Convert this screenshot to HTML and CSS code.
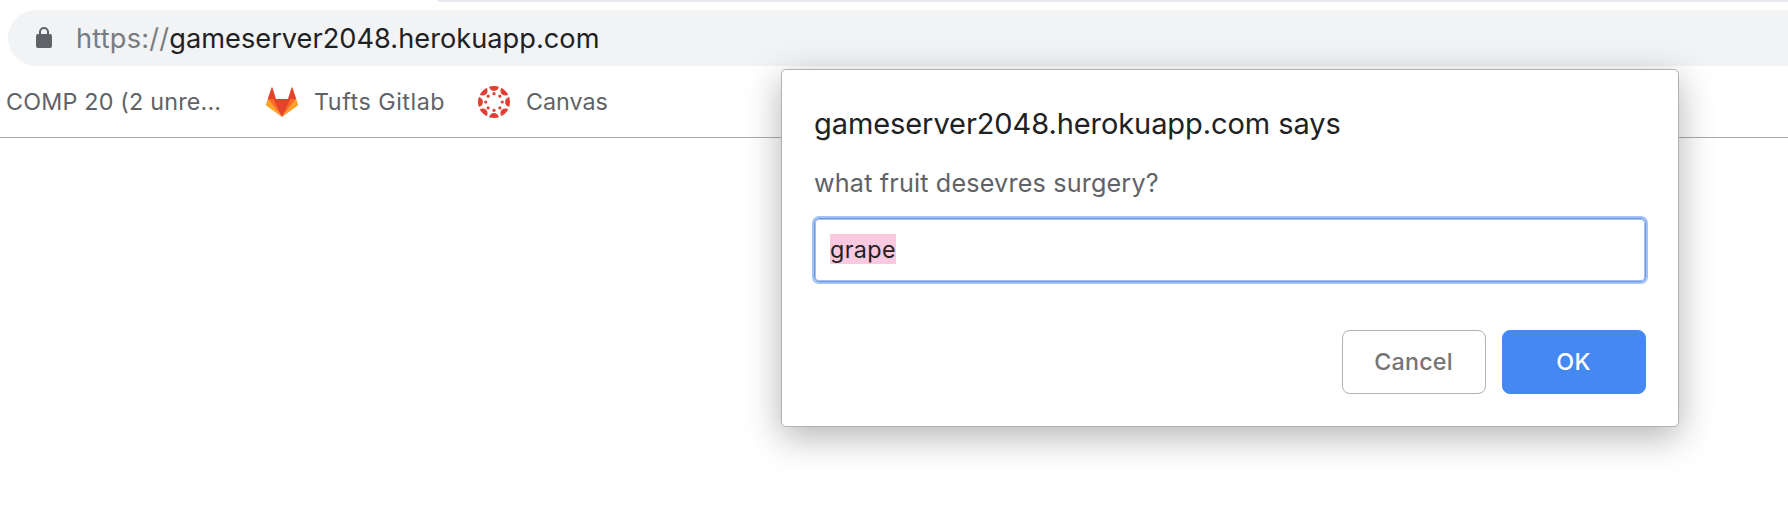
FILE: index.html
```
<!DOCTYPE html>
<html lang="en">
<head>
<meta charset="utf-8">
<title>gameserver2048.herokuapp.com</title>
<link rel="stylesheet" href="styles.css">
</head>
<body>
<div class="browser">
  <div class="tab-edge"></div>
  <div class="omnibox">
    <svg class="lock" width="16" height="22" viewBox="0 0 16 22"><path d="M4 8V5a4 4 0 0 1 8 0v3" fill="none" stroke="#5f6368" stroke-width="2"/><rect y="7" width="16" height="14" rx="2" fill="#5f6368"/></svg>
    <div class="url"><span class="scheme">https://</span><span class="host">gameserver2048.herokuapp.com</span></div>
  </div>
  <div class="bookmarks">
    <span class="bookmark first">COMP 20 (2 unre...</span>
    <svg class="gitlab" width="32" height="30" viewBox="0 0 32 30"><path d="M1.700 12 0 17.500q-.2.800.5 1.300L16 30zM30.300 12l1.700 5.500q.2.800-.5 1.300L16 30z" fill="#fca326"/><path d="M16 30 10 12H1.700zM16 30l6-18h8.300z" fill="#fc6d26"/><path d="M16 30 7.500 12h17z" fill="#e24329"/><path d="M1.700 12 5.600.6q.4-.9.800 0L10 12zM30.300 12 26.400.6q-.4-.9-.8 0L22 12z" fill="#e24329"/></svg>
    <span class="bookmark tufts">Tufts Gitlab</span>
    <svg class="canvas" width="32" height="32" viewBox="0 0 32 32"><defs><clipPath id="disc"><circle cx="16" cy="16" r="16"/></clipPath><g id="spoke"><circle cx="16" cy="0" r="4.900"/><circle cx="16" cy="7.700" r="1.600"/></g></defs><g clip-path="url(#disc)" fill="#e13f33"><use href="#spoke"/><use href="#spoke" transform="rotate(45 16 16)"/><use href="#spoke" transform="rotate(90 16 16)"/><use href="#spoke" transform="rotate(135 16 16)"/><use href="#spoke" transform="rotate(180 16 16)"/><use href="#spoke" transform="rotate(225 16 16)"/><use href="#spoke" transform="rotate(270 16 16)"/><use href="#spoke" transform="rotate(315 16 16)"/></g></svg>
    <span class="bookmark last">Canvas</span>
  </div>
  <div class="dialog">
    <div class="title">gameserver2048.herokuapp.com says</div>
    <div class="message">what fruit desevres surgery?</div>
    <div class="field"><span class="selection">grape</span></div>
    <div class="actions"><button class="btn">Cancel</button><button class="btn primary">OK</button></div>
  </div>
</div>
</body>
</html>
```
FILE: styles.css
```
body { margin: 0; background: #fff; font-family: Inter, "Liberation Sans", sans-serif; }
.browser { position: relative; width: 1788px; height: 512px; overflow: hidden; }
.tab-edge { height: 2px; margin-left: 437px; background: #e6e9ed; border-bottom-left-radius: 6px 2px; }
.omnibox { display: flex; align-items: center; box-sizing: border-box; height: 56px; margin: 8px 0 0 8px; padding-left: 28px; border-radius: 28px 0 0 28px; background: #f1f3f4; }
.url { margin-left: 24px; padding-top: 2px; font-size: 27.2px; line-height: 34px; white-space: nowrap; color: #202124; }
.scheme { color: #777c81; letter-spacing: .2px; }
.host { letter-spacing: .02px; }
.bookmarks { display: flex; align-items: center; box-sizing: border-box; height: 72px; padding-left: 6px; border-bottom: 1px solid #acacac; color: #5f6368; font-size: 23.3px; line-height: 30px; letter-spacing: .2px; white-space: nowrap; }
.first { width: 260px; }
.tufts { margin-left: 16px; width: 164px; letter-spacing: .52px; }
.canvas { margin-right: 16px; }
.last { letter-spacing: 0; }
.dialog { position: absolute; left: 781px; top: 69px; box-sizing: border-box; width: 898px; height: 358px; padding: 36px 32px 32px; border: 1px solid #b1b1b1; border-radius: 5px; background: #fff; box-shadow: 0 10px 36px rgba(0,0,0,.3); }
.title { font-size: 29px; line-height: 36px; letter-spacing: -.08px; color: #202124; }
.message { margin-top: 25px; font-size: 25.2px; line-height: 32px; letter-spacing: .16px; color: #5f6368; }
.field { display: flex; align-items: center; box-sizing: border-box; height: 64px; margin-top: 19px; padding-left: 15px; border: 1px solid #6f97d6; border-radius: 5px; box-shadow: 0 0 0 2px #a1c3f8, inset 0 0 0 1px #a1c3f8; font-size: 23.3px; letter-spacing: .4px; color: #202124; }
.selection { box-sizing: border-box; height: 30px; margin-top: -2px; padding-top: 1px; background: #fac9e0; line-height: 30px; }
.actions { display: flex; justify-content: flex-end; gap: 16px; margin-top: 48px; }
.btn { box-sizing: border-box; width: 144px; height: 64px; padding: 0 1px 2px 0; border: 1px solid #b2b2b2; border-radius: 8px; background: #fff; color: #757575; font: 500 23.3px Inter, sans-serif; letter-spacing: .2px; }
.primary { border-color: #4688f1; background: #4688f1; color: #fff; }
```
